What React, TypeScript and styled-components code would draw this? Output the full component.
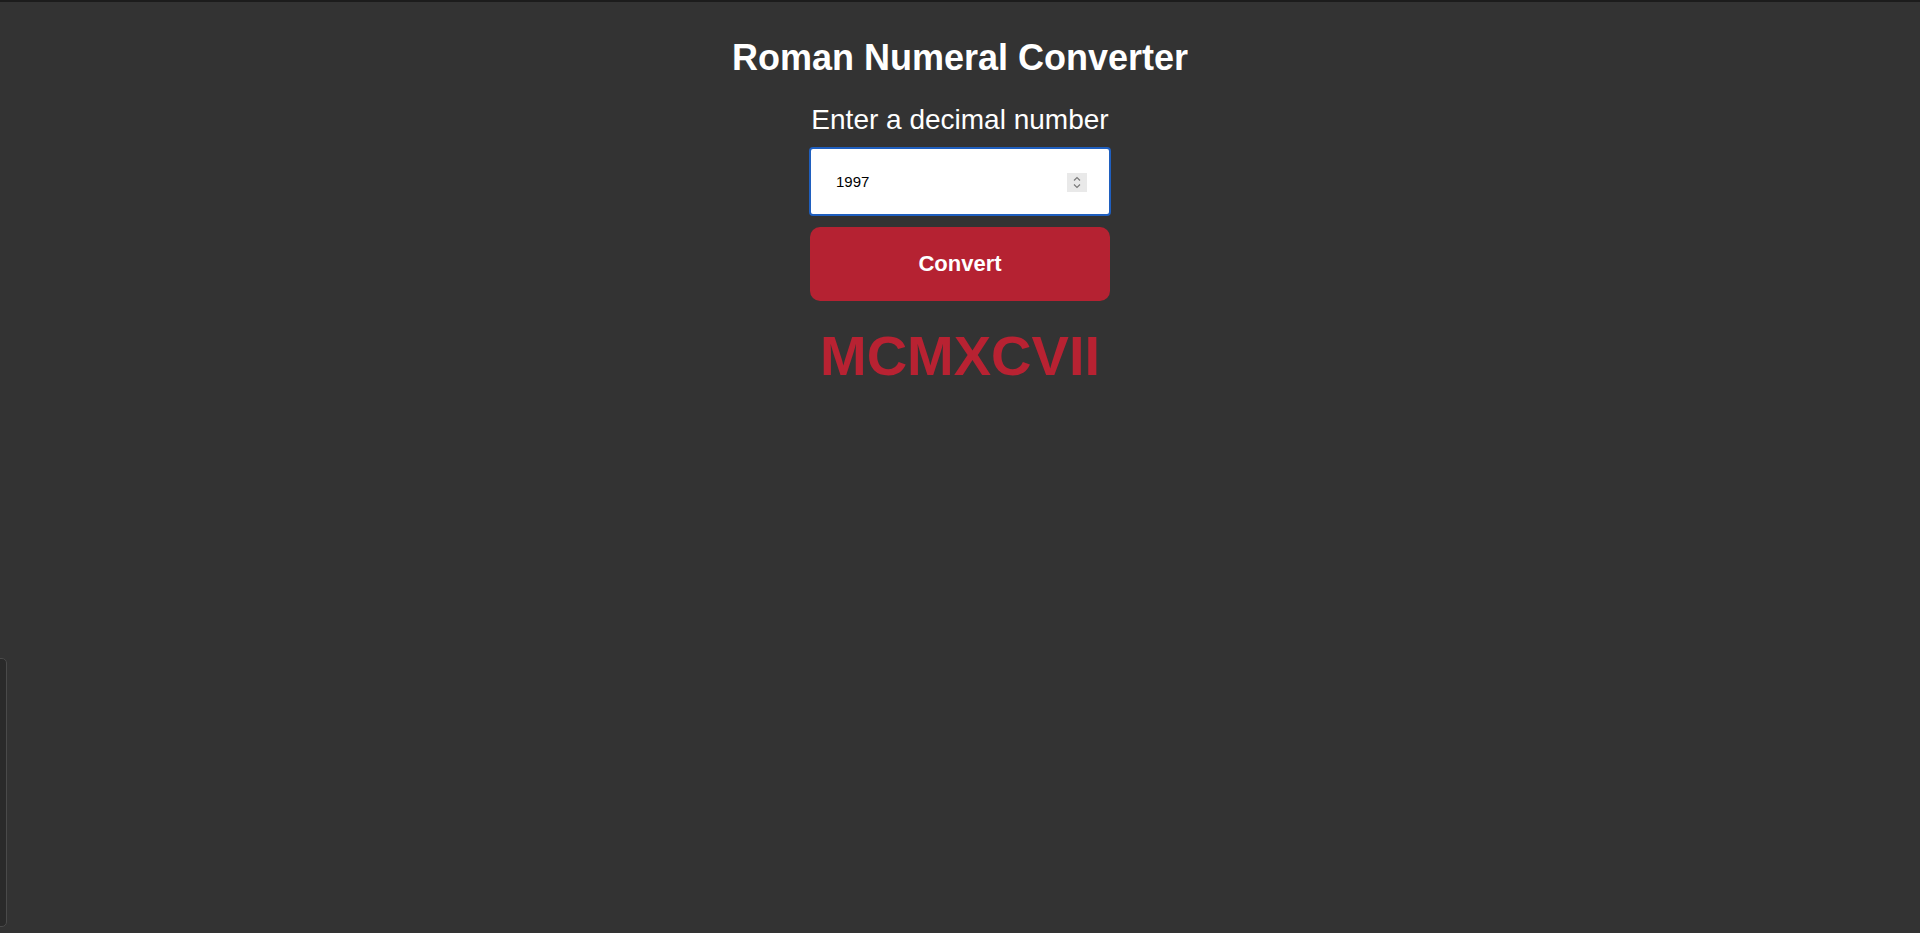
import React, { useState } from "react";
import styled, { createGlobalStyle } from "styled-components";

const GlobalStyle = createGlobalStyle`
  html, body {
    margin: 0;
    padding: 0;
    background: #333333;
    min-height: 100%;
  }
  body {
    border-top: 2px solid #1c1c1c;
    font-family: "Liberation Sans", Arial, sans-serif;
    color: #ffffff;
    min-height: 931px;
  }
`;

const Page = styled.main`
  display: flex;
  flex-direction: column;
  align-items: center;
  padding-top: 35px;
`;

const Title = styled.h1`
  margin: 0;
  font-size: 36px;
  line-height: 41px;
  font-weight: 700;
  color: #ffffff;
`;

const Label = styled.label`
  margin-top: 26px;
  font-size: 28px;
  line-height: 32px;
  color: #ffffff;
`;

const Field = styled.div`
  position: relative;
  margin-top: 11px;
  width: 302px;
  height: 69px;
`;

const NumberInput = styled.input`
  box-sizing: border-box;
  width: 100%;
  height: 100%;
  border: 2px solid #1f5fbf;
  border-radius: 4px;
  background: #ffffff;
  padding: 0 0 0 25px;
  font-family: "Liberation Sans", Arial, sans-serif;
  font-size: 15px;
  color: #000000;
  outline: none;
  -moz-appearance: textfield;
  &::-webkit-inner-spin-button,
  &::-webkit-outer-spin-button {
    -webkit-appearance: none;
    margin: 0;
  }
`;

const Spinner = styled.span`
  position: absolute;
  left: 258px;
  top: 26px;
  width: 20px;
  height: 19px;
  background: #e9e9e9;
  display: flex;
  align-items: center;
  justify-content: center;
  pointer-events: none;
`;

const ConvertButton = styled.button`
  box-sizing: border-box;
  margin-top: 11px;
  width: 300px;
  height: 74px;
  border: none;
  border-radius: 10px;
  background: #b52232;
  color: #ffffff;
  font-family: "Liberation Sans", Arial, sans-serif;
  font-size: 22px;
  font-weight: 700;
  cursor: pointer;
`;

const Result = styled.div`
  margin-top: 22px;
  font-size: 56px;
  line-height: 66px;
  font-weight: 700;
  color: #b82232;
`;

const SidePanel = styled.div`
  position: fixed;
  left: -5px;
  top: 658px;
  width: 12px;
  height: 269px;
  box-sizing: border-box;
  background: #2a2a2a;
  border: 1px solid #4a4a4a;
  border-radius: 5px;
`;

const toRoman = (n: number): string => {
  const map: [number, string][] = [
    [1000, "M"], [900, "CM"], [500, "D"], [400, "CD"],
    [100, "C"], [90, "XC"], [50, "L"], [40, "XL"],
    [10, "X"], [9, "IX"], [5, "V"], [4, "IV"], [1, "I"],
  ];
  let out = "";
  let v = n;
  for (const [k, s] of map) {
    while (v >= k) {
      out += s;
      v -= k;
    }
  }
  return out;
};

export default function App() {
  const [value, setValue] = useState("1997");
  const [result, setResult] = useState(toRoman(1997));

  return (
    <>
      <GlobalStyle />
      <Page>
        <Title>Roman Numeral Converter</Title>
        <Label htmlFor="number">Enter a decimal number</Label>
        <Field>
          <NumberInput
            id="number"
            type="number"
            value={value}
            onChange={(e) => setValue(e.target.value)}
          />
          <Spinner>
            <svg width="10" height="15" viewBox="0 0 10 15" fill="none" stroke="#7a7a7a" strokeWidth="1.2">
              <path d="M2 5.5 L5 2.5 L8 5.5" />
              <path d="M2 9.5 L5 12.5 L8 9.5" />
            </svg>
          </Spinner>
        </Field>
        <ConvertButton onClick={() => setResult(toRoman(parseInt(value, 10) || 0))}>
          Convert
        </ConvertButton>
        <Result>{result}</Result>
      </Page>
      <SidePanel />
    </>
  );
}
